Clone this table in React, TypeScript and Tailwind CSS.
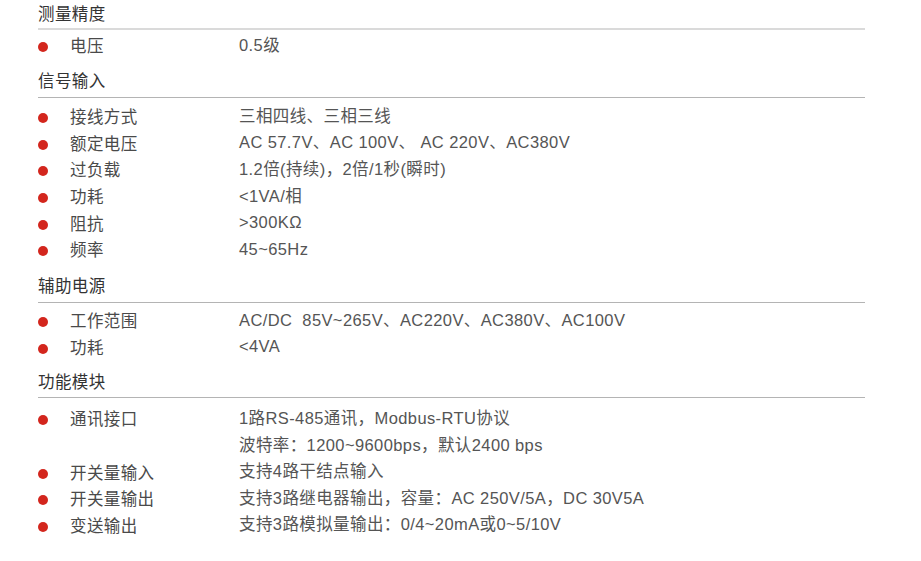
import React from "react";

interface Row {
  label?: string;
  value: string;
}

interface Section {
  title: string;
  wrap: string;
  rowsPad: string;
  rows: Row[];
}

const sections: Section[] = [
  {
    title: "测量精度",
    wrap: "mt-0",
    rowsPad: "pt-[2px]",
    rows: [{ label: "电压", value: "0.5级" }],
  },
  {
    title: "信号输入",
    wrap: "mt-[9px]",
    rowsPad: "pt-[5px]",
    rows: [
      { label: "接线方式", value: "三相四线、三相三线" },
      { label: "额定电压", value: "AC 57.7V、AC 100V、 AC 220V、AC380V" },
      { label: "过负载", value: "1.2倍(持续)，2倍/1秒(瞬时)" },
      { label: "功耗", value: "<1VA/相" },
      { label: "阻抗", value: ">300KΩ" },
      { label: "频率", value: "45~65Hz" },
    ],
  },
  {
    title: "辅助电源",
    wrap: "mt-[10px]",
    rowsPad: "pt-[4px]",
    rows: [
      { label: "工作范围", value: "AC/DC  85V~265V、AC220V、AC380V、AC100V" },
      { label: "功耗", value: "<4VA" },
    ],
  },
  {
    title: "功能模块",
    wrap: "mt-[8px]",
    rowsPad: "pt-[7px]",
    rows: [
      { label: "通讯接口", value: "1路RS-485通讯，Modbus-RTU协议" },
      { value: "波特率：1200~9600bps，默认2400 bps" },
      { label: "开关量输入", value: "支持4路干结点输入" },
      { label: "开关量输出", value: "支持3路继电器输出，容量：AC 250V/5A，DC 30V5A" },
      { label: "变送输出", value: "支持3路模拟量输出：0/4~20mA或0~5/10V" },
    ],
  },
];

const SpecRow: React.FC<{ row: Row }> = ({ row }) => (
  <div className="flex items-center h-[26.67px]">
    <div className="w-[32px] flex items-center pt-[4px]">
      {row.label && <span className="block w-[10px] h-[10px] rounded-full bg-[#d3261d]" />}
    </div>
    <div className="w-[169px] pt-[3px] text-[16.5px] tracking-[0.4px] text-[#4a4a4a]">{row.label}</div>
    <div className="whitespace-pre text-[16.5px] tracking-[0.4px] text-[#555]">{row.value}</div>
  </div>
);

export default function App() {
  return (
    <div
      className="w-[921px] h-[561px] bg-white pl-[38px] overflow-hidden"
      style={{ fontFamily: '"Liberation Sans", "Noto Sans CJK SC", sans-serif' }}
    >
      <div className="w-[827px]">
        {sections.map((s, i) => (
          <div key={s.title} className={s.wrap}>
            <div className="h-[28px] flex items-center text-[16.5px] tracking-[0.4px] text-[#333]">{s.title}</div>
            <div className={i === 0 ? "mt-0 h-[2px] bg-[#dadada]" : "mt-[1px] h-px bg-[#b4b4b4]"} />
            <div className={s.rowsPad}>
              {s.rows.map((r, j) => (
                <SpecRow key={j} row={r} />
              ))}
            </div>
          </div>
        ))}
      </div>
    </div>
  );
}
